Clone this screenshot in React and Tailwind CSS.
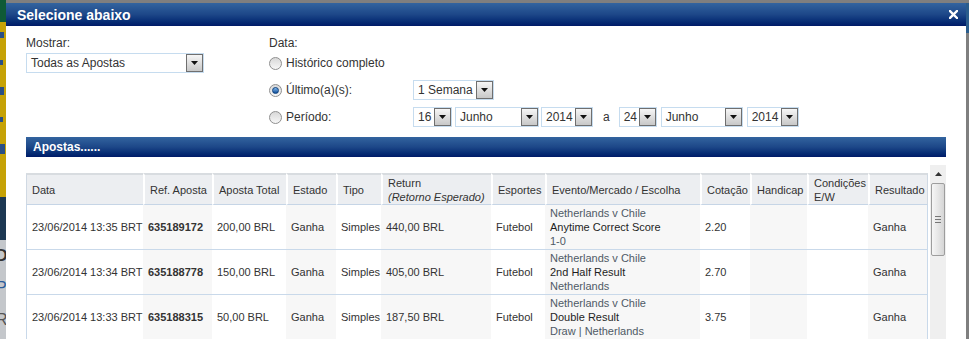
import React from 'react';

// Native-looking select with a grey dropdown button on the right
const FakeSelect = ({ value, width }) => (
  <div className={`flex items-center h-[20px] border border-[#c6dcef] bg-white ${width}`}>
    <span className="flex-1 pl-[4px] text-[12px] leading-[14px] text-[#333] whitespace-nowrap overflow-hidden">{value}</span>
    <span className="flex items-center justify-center w-[17px] h-[18px] border border-[#6f6f6f] bg-gradient-to-b from-[#f6f6f6] to-[#c8c8c8]">
      <svg width="7" height="4" viewBox="0 0 7 4"><path d="M0 0h7L3.5 4z" fill="#111" /></svg>
    </span>
  </div>
);

const Radio = ({ checked }) => (
  <span className="relative inline-flex items-center justify-center w-[13px] h-[13px] rounded-full border border-[#8f8f8f] bg-gradient-to-b from-[#d8d8d8] to-[#f7f7f7]">
    {checked && (
      <span className="w-[7px] h-[7px] rounded-full bg-gradient-to-b from-[#7fb6ea] to-[#0d4f9a] border border-[#0b3f7c]" />
    )}
  </span>
);

const columns = [
  { w: 117, label: 'Data' },
  { w: 69, label: 'Ref. Aposta' },
  { w: 74, label: 'Aposta Total' },
  { w: 50, label: 'Estado' },
  { w: 45, label: 'Tipo' },
  { w: 110, label: 'Return', sub: '(Retorno Esperado)' },
  { w: 54, label: 'Esportes' },
  { w: 155, label: 'Evento/Mercado / Escolha' },
  { w: 50, label: 'Cotação' },
  { w: 57, label: 'Handicap' },
  { w: 61, label: 'Condições E/W' },
  { w: 60, label: 'Resultado' },
];

const bets = [
  { date: '23/06/2014 13:35 BRT', ref: '635189172', total: '200,00 BRL', ret: '440,00 BRL', market: 'Anytime Correct Score', pick: '1-0', odds: '2.20' },
  { date: '23/06/2014 13:34 BRT', ref: '635188778', total: '150,00 BRL', ret: '405,00 BRL', market: '2nd Half Result', pick: 'Netherlands', odds: '2.70' },
  { date: '23/06/2014 13:33 BRT', ref: '635188315', total: '50,00 BRL', ret: '187,50 BRL', market: 'Double Result', pick: 'Draw | Netherlands', odds: '3.75' },
  { date: '23/06/2014 13:31 BRT', ref: '635187901', total: '100,00 BRL', ret: '220,00 BRL', market: 'Match Result', pick: 'Netherlands', odds: '2.20' },
];

export default function App() {
  return (
    <div className="h-[339px] w-[969px] overflow-hidden flex bg-[#7f7f7f] font-['Liberation_Sans',Arial,sans-serif]">
      {/* page behind the dialog, left edge */}
      <div className="w-[6px] flex flex-col shrink-0">
        <div className="h-[22px] bg-[#0f5a36]" />
        <div className="h-[175px] bg-[#c6a206] flex flex-col gap-[22px] pt-[10px]">
          <div className="h-[6px] w-[4px] bg-[#2a4f86]" />
          <div className="h-[5px] w-[3px] bg-[#2a4f86]" />
          <div className="h-[8px] w-[4px] bg-[#2a4f86]" />
          <div className="h-[5px] w-[3px] bg-[#2a4f86]" />
          <div className="h-[10px] w-[5px] bg-[#2a4f86]" />
        </div>
        <div className="h-[43px] bg-[#1d3853]" />
        <div className="flex-1 bg-[#c4c7cb] overflow-hidden text-[16px] leading-[32px]">
          <div className="-ml-[4px] font-bold text-[#333]">D</div>
          <div className="-ml-[4px] text-[#2a5c9a]">P</div>
          <div className="-ml-[4px] text-[#555]">R</div>
        </div>
      </div>

      {/* dialog */}
      <div className="w-[960px] shrink-0 mt-[3px] bg-white flex flex-col">
        <div className="h-[23px] shrink-0 flex items-center justify-between pl-[11px] pr-[8px] bg-gradient-to-b from-[#33649f] via-[#1d4788] to-[#001a68]">
          <span className="text-white font-bold text-[14px] leading-[16px]">Selecione abaixo</span>
          <svg width="9" height="9" viewBox="0 0 9 9">
            <path d="M1 1l7 7M8 1L1 8" stroke="#fff" strokeWidth="2.4" strokeLinecap="square" />
          </svg>
        </div>

        <div className="px-[20px] pt-[10px] flex flex-col">
          <div className="flex">
            <div className="w-[243px] shrink-0">
              <div className="text-[12px] leading-[14px] text-[#333] mb-[3px]">Mostrar:</div>
              <FakeSelect value="Todas as Apostas" width="w-[178px]" />
            </div>
            <div className="flex flex-col">
              <div className="text-[12px] leading-[14px] text-[#333] mb-[3px]">Data:</div>
              <div className="flex flex-col gap-[7px]">
                <div className="h-[20px] flex items-center">
                  <Radio />
                  <span className="ml-[4px] text-[12px] leading-[14px] text-[#333]">Histórico completo</span>
                </div>
                <div className="h-[20px] flex items-center">
                  <div className="w-[144px] flex items-center">
                    <Radio checked />
                    <span className="ml-[4px] text-[12px] leading-[14px] text-[#333]">Último(a)(s):</span>
                  </div>
                  <FakeSelect value="1 Semana" width="w-[81px]" />
                </div>
                <div className="h-[20px] flex items-center">
                  <div className="w-[144px] flex items-center">
                    <Radio />
                    <span className="ml-[4px] text-[12px] leading-[14px] text-[#333]">Período:</span>
                  </div>
                  <div className="flex items-center">
                    <FakeSelect value="16" width="w-[39px]" />
                    <div className="ml-[3px]"><FakeSelect value="Junho" width="w-[84px]" /></div>
                    <div className="ml-[2px]"><FakeSelect value="2014" width="w-[52px]" /></div>
                  </div>
                  <span className="ml-[10px] mr-[9px] text-[12px] leading-[14px] text-[#333]">a</span>
                  <div className="flex items-center gap-[4px]">
                    <FakeSelect value="24" width="w-[38px]" />
                    <FakeSelect value="Junho" width="w-[82px]" />
                    <FakeSelect value="2014" width="w-[52px]" />
                  </div>
                </div>
              </div>
            </div>
          </div>

          <div className="mt-[10px] h-[20px] w-[920px] flex items-center pl-[7px] bg-gradient-to-b from-[#33649f] via-[#1d4788] to-[#001a68]">
            <span className="text-white font-bold text-[12px] leading-[14px]">Apostas......</span>
          </div>

          <div className="mt-[8px] flex">
            <div className="w-[902px] pt-[8px]">
              <table className="table-fixed border-separate border-spacing-0 w-[902px] text-[11px] leading-[14px] text-[#333]">
                <colgroup>
                  {columns.map((c, i) => (
                    <col key={i} style={{ width: c.w }} />
                  ))}
                </colgroup>
                <thead>
                  <tr>
                    {columns.map((c, i) => (
                      <th
                        key={i}
                        className={`h-[32px] bg-[#eceef1] border-t-2 border-t-[#d8dce0] border-b border-b-[#c6d5e6] px-[5px] text-left font-normal align-middle ${i === 0 ? 'border-l border-l-[#d0d9e3]' : 'border-l-2 border-l-white'} ${i === columns.length - 1 ? 'border-r border-r-[#d0d9e3]' : ''}`}
                      >
                        {c.label}
                        {c.sub && <div className="italic">{c.sub}</div>}
                      </th>
                    ))}
                  </tr>
                </thead>
                <tbody>
                  {bets.map((b) => {
                    const cells = [
                      b.date,
                      <b key="r">{b.ref}</b>,
                      b.total,
                      'Ganha',
                      'Simples',
                      b.ret,
                      'Futebol',
                      <div key="e">
                        <div className="text-[#4f5a66]">Netherlands v Chile</div>
                        <div className="text-[#1e1e1e]">{b.market}</div>
                        <div className="text-[#4f5a66]">{b.pick}</div>
                      </div>,
                      b.odds,
                      '',
                      '',
                      'Ganha',
                    ];
                    return (
                      <tr key={b.ref}>
                        {cells.map((v, i) => (
                          <td
                            key={i}
                            className={`h-[45px] px-[5px] align-middle whitespace-nowrap border-b border-b-[#c9d9ea] ${i % 2 === 1 ? 'bg-[#f7f7f7]' : 'bg-white'} ${i === 0 ? 'border-l border-l-[#c9d9ea]' : ''} ${i === cells.length - 1 ? 'border-r border-r-[#c9d9ea]' : ''}`}
                          >
                            {v}
                          </td>
                        ))}
                      </tr>
                    );
                  })}
                </tbody>
              </table>
            </div>

            {/* scrollbar */}
            <div className="ml-[2px] w-[16px] h-[200px] bg-[#efefef] flex flex-col items-center">
              <div className="h-[18px] flex items-center justify-center">
                <svg width="7" height="4" viewBox="0 0 7 4"><path d="M3.5 0L7 4H0z" fill="#333" /></svg>
              </div>
              <div className="w-[14px] h-[73px] rounded-[2px] border border-[#9d9d9d] bg-gradient-to-r from-[#f6f6f6] to-[#d6d6d6] flex flex-col items-center justify-center gap-[2px]">
                <div className="w-[6px] h-px bg-[#777]" />
                <div className="w-[6px] h-px bg-[#777]" />
                <div className="w-[6px] h-px bg-[#777]" />
              </div>
            </div>
          </div>
        </div>
      </div>

      {/* page behind the dialog, right edge */}
      <div className="flex-1 flex flex-col">
        <div className="h-[3px]" />
        <div className="h-[30px] bg-[#2a5d8c]" />
      </div>
    </div>
  );
}
